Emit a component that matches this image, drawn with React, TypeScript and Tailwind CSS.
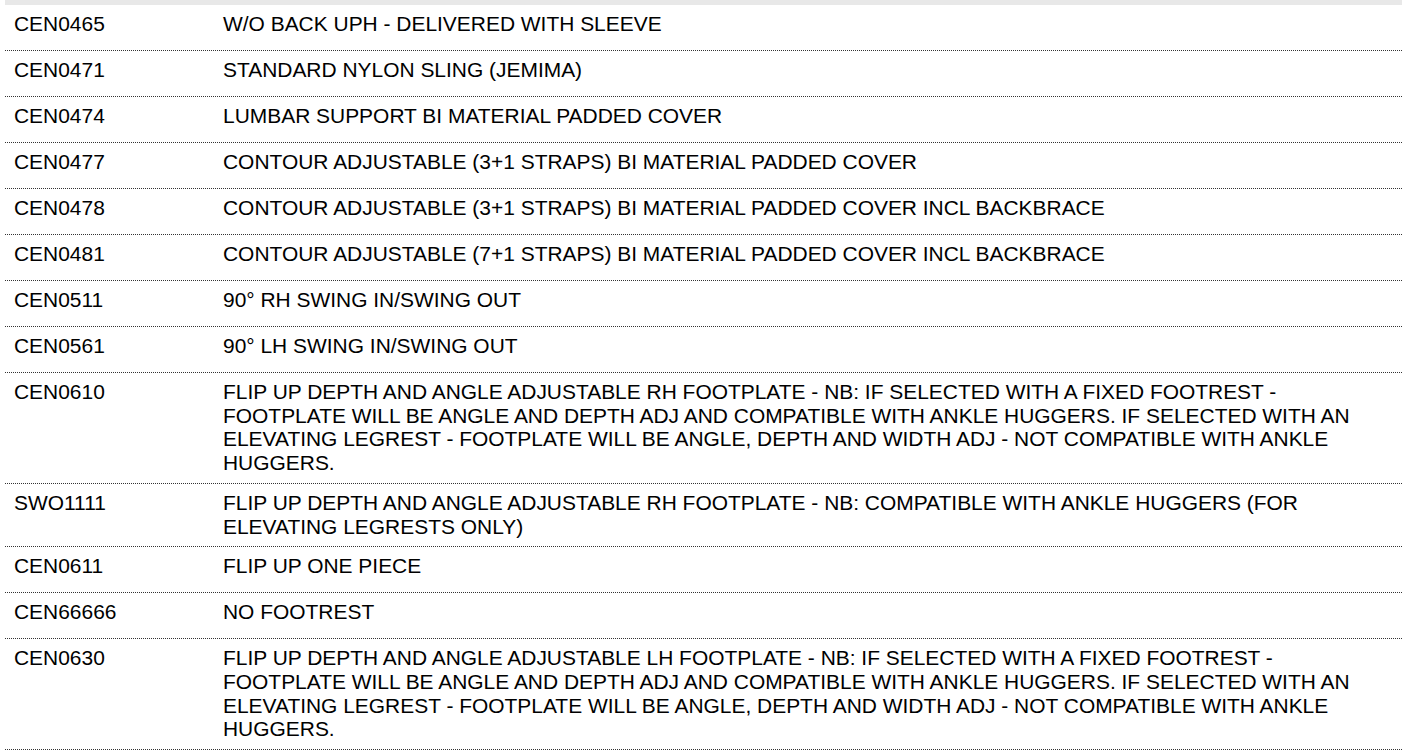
import React from "react";

const rows: [string, string][] = [
  ["CEN0465", "W/O BACK UPH - DELIVERED WITH SLEEVE"],
  ["CEN0471", "STANDARD NYLON SLING (JEMIMA)"],
  ["CEN0474", "LUMBAR SUPPORT BI MATERIAL PADDED COVER"],
  ["CEN0477", "CONTOUR ADJUSTABLE (3+1 STRAPS) BI MATERIAL PADDED COVER"],
  ["CEN0478", "CONTOUR ADJUSTABLE (3+1 STRAPS) BI MATERIAL PADDED COVER INCL BACKBRACE"],
  ["CEN0481", "CONTOUR ADJUSTABLE (7+1 STRAPS) BI MATERIAL PADDED COVER INCL BACKBRACE"],
  ["CEN0511", "90° RH SWING IN/SWING OUT"],
  ["CEN0561", "90° LH SWING IN/SWING OUT"],
  [
    "CEN0610",
    "FLIP UP DEPTH AND ANGLE ADJUSTABLE RH FOOTPLATE - NB: IF SELECTED WITH A FIXED FOOTREST - FOOTPLATE WILL BE ANGLE AND DEPTH ADJ AND COMPATIBLE WITH ANKLE HUGGERS. IF SELECTED WITH AN ELEVATING LEGREST - FOOTPLATE WILL BE ANGLE, DEPTH AND WIDTH ADJ - NOT COMPATIBLE WITH ANKLE HUGGERS.",
  ],
  [
    "SWO1111",
    "FLIP UP DEPTH AND ANGLE ADJUSTABLE RH FOOTPLATE - NB: COMPATIBLE WITH ANKLE HUGGERS (FOR ELEVATING LEGRESTS ONLY)",
  ],
  ["CEN0611", "FLIP UP ONE PIECE"],
  ["CEN66666", "NO FOOTREST"],
  [
    "CEN0630",
    "FLIP UP DEPTH AND ANGLE ADJUSTABLE LH FOOTPLATE - NB: IF SELECTED WITH A FIXED FOOTREST - FOOTPLATE WILL BE ANGLE AND DEPTH ADJ AND COMPATIBLE WITH ANKLE HUGGERS. IF SELECTED WITH AN ELEVATING LEGREST - FOOTPLATE WILL BE ANGLE, DEPTH AND WIDTH ADJ - NOT COMPATIBLE WITH ANKLE HUGGERS.",
  ],
];

export default function App() {
  return (
    <div
      className="min-h-[753px] bg-white pl-[5px] text-black"
      style={{ fontFamily: '"Liberation Sans", Arial, sans-serif' }}
    >
      <div className="w-[1397px]">
        <div className="h-[5px] bg-[#e8e8e8]" />
        {rows.map(([code, desc]) => (
          <div
            key={code}
            className="flex min-h-[46px] border-b border-dotted border-[#333] text-[20.95px] leading-[23.7px]"
          >
            <div className="w-[218px] shrink-0 pl-[9px] pt-[7px] pb-[7px]">{code}</div>
            <div className="flex-1 pr-[9px] pt-[7px] pb-[8px]">{desc}</div>
          </div>
        ))}
      </div>
    </div>
  );
}
